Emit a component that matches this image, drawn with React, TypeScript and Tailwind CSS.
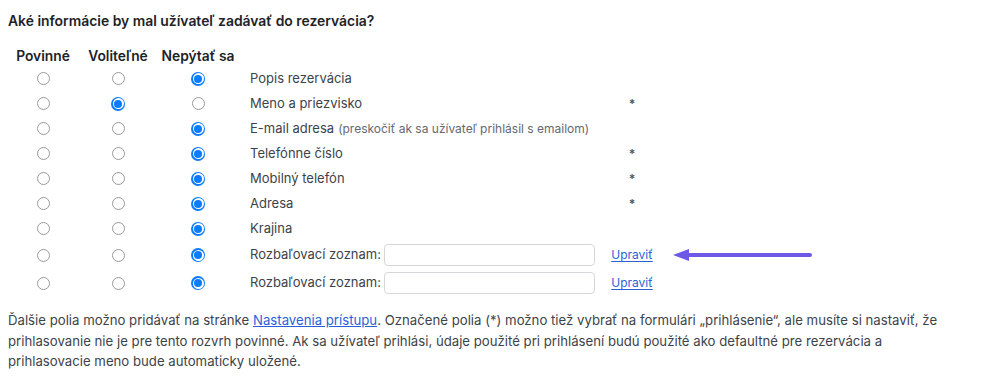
import React from 'react';

type Choice = 0 | 1 | 2;

type Row = {
    label: string;
    note?: string;
    choice: Choice;
    star?: boolean;
    select?: boolean;
    arrow?: boolean;
};

const rows: Row[] = [
    { label: 'Popis rezervácia', choice: 2 },
    { label: 'Meno a priezvisko', choice: 1, star: true },
    { label: 'E-mail adresa', note: '(preskočiť ak sa užívateľ prihlásil s emailom)', choice: 2 },
    { label: 'Telefónne číslo', choice: 2, star: true },
    { label: 'Mobilný telefón', choice: 2, star: true },
    { label: 'Adresa', choice: 2, star: true },
    { label: 'Krajina', choice: 2 },
    { label: 'Rozbaľovací zoznam:', choice: 2, select: true, arrow: true },
    { label: 'Rozbaľovací zoznam:', choice: 2, select: true },
];

const Radio = ({ checked }: { checked: boolean }) =>
    checked ? (
        <span className="flex h-[14px] w-[14px] items-center justify-center rounded-full bg-[#0a7cff]">
            <span className="flex h-[11px] w-[11px] items-center justify-center rounded-full bg-white">
                <span className="h-[8px] w-[8px] rounded-full bg-[#0a7cff]" />
            </span>
        </span>
    ) : (
        <span className="h-[13px] w-[13px] rounded-full border border-[#9a9a9a] bg-white" />
    );

const Arrow = () => (
    <svg width="140" height="14" viewBox="0 0 140 14" className="ml-[21px]">
        <line x1="12" y1="7" x2="137" y2="7" stroke="#6c5ae6" strokeWidth="4" strokeLinecap="round" />
        <path d="M0 7 L16 1 L16 13 Z" fill="#6c5ae6" />
    </svg>
);

const App = () => {
    return (
        <div className="min-h-[376px] w-[984px] bg-white px-2 text-[13px] text-[#3c434a] [font-family:Inter,'Noto_Sans',sans-serif]">
            <h2 className="pt-[12px] text-[13.9px] font-semibold leading-[18px] text-[#1d2327]">
                Aké informácie by mal užívateľ zadávať do rezervácia?
            </h2>

            <div className="mt-[16px] grid grid-cols-[70px_80px_80px_374px_40px_auto]">
                <div className="flex h-[20px] items-center justify-center text-[13.8px] font-semibold text-[#1d2327]">Povinné</div>
                <div className="flex h-[20px] items-center justify-center text-[13.8px] font-semibold text-[#1d2327]">Voliteľné</div>
                <div className="flex h-[20px] items-center justify-center text-[13.8px] font-semibold text-[#1d2327]">Nepýtať sa</div>
                <div />
                <div />
                <div />

                {rows.map((r, i) => {
                    const h = r.select ? 'h-[28px]' : 'h-[25px]';
                    return (
                        <React.Fragment key={i}>
                            {[0, 1, 2].map((c) => (
                                <div key={c} className={`flex ${h} items-center justify-center`}>
                                    <Radio checked={r.choice === c} />
                                </div>
                            ))}
                            <div className={`flex ${h} items-center pl-[12px] text-[#3c434a]`}>
                                <span>{r.label}</span>
                                {r.note && <span className="ml-[4px] text-[12px] text-[#646970]">{r.note}</span>}
                                {r.select && (
                                    <input
                                        type="text"
                                        className="ml-[3px] h-[22px] w-[211px] rounded-[4px] border border-[#d5d7da] bg-white"
                                    />
                                )}
                            </div>
                            <div className={`flex ${h} items-center justify-center`}>
                                {r.star && <span className="text-[12px] font-bold text-[#50575e]">*</span>}
                                {r.select && (
                                    <a href="#" className="text-[12px] text-[#2b5fd9] underline underline-offset-2">
                                        Upraviť
                                    </a>
                                )}
                            </div>
                            <div className={`flex ${h} items-center`}>{r.arrow && <Arrow />}</div>
                        </React.Fragment>
                    );
                })}
            </div>

            <p className="mt-[13px] w-[950px] text-[13.2px] leading-[20.5px] text-[#3c434a]">
                Ďalšie polia možno pridávať na stránke{' '}
                <a href="#" className="text-[#2b5fd9] underline">
                    Nastavenia prístupu
                </a>
                . Označené polia (*) možno tiež vybrať na formulári „prihlásenie“, ale musíte si nastaviť, že
                prihlasovanie nie je pre tento rozvrh povinné. Ak sa užívateľ prihlási, údaje použité pri prihlásení budú
                použité ako defaultné pre rezervácia a prihlasovacie meno bude automaticky uložené.
            </p>
        </div>
    );
};

export default App;
